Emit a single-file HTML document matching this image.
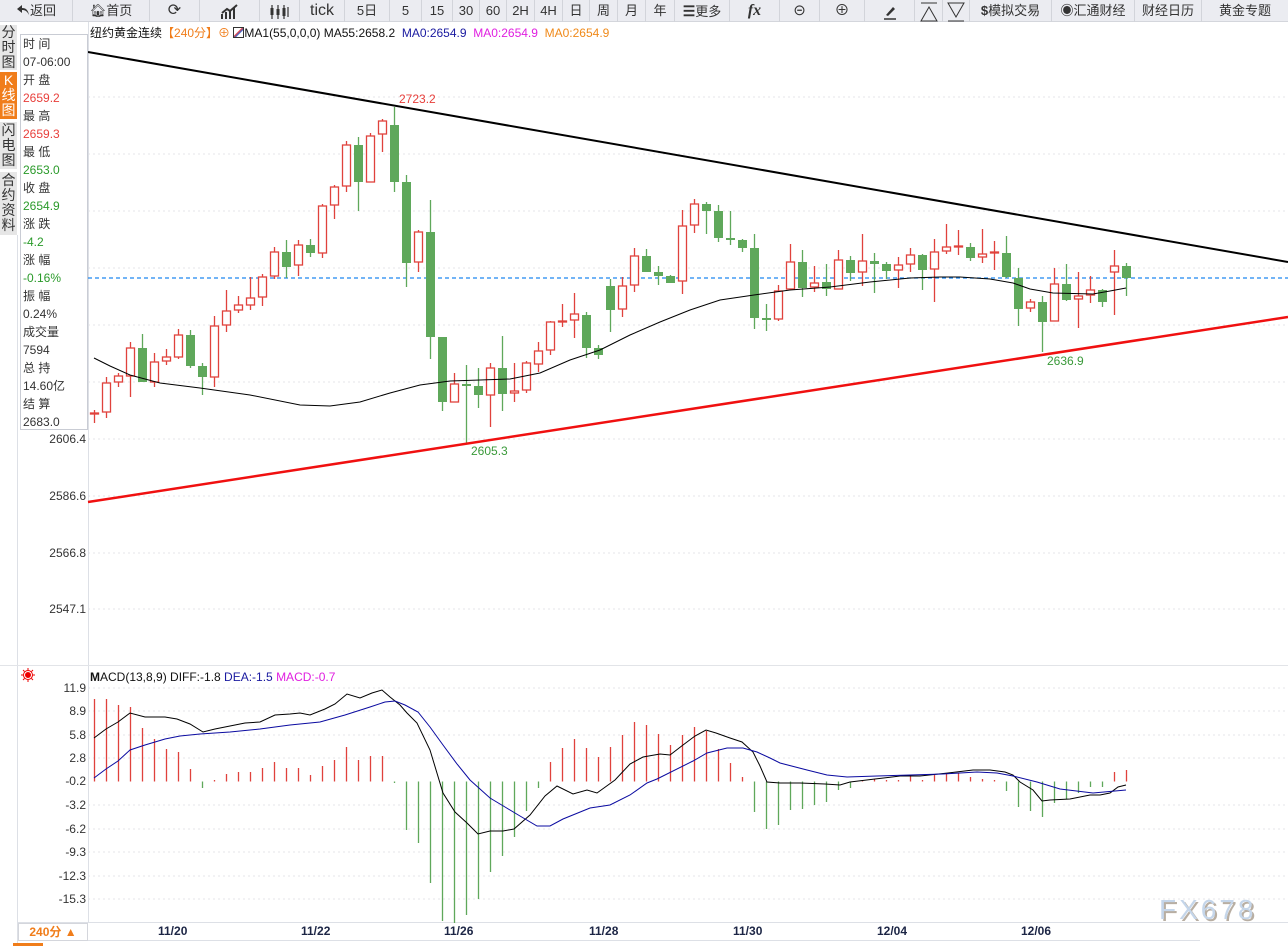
<!DOCTYPE html>
<html><head><meta charset="utf-8">
<style>
*{margin:0;padding:0;box-sizing:border-box}
body{width:1288px;height:946px;overflow:hidden;background:#fff;font-family:"Liberation Sans","Noto Sans CJK SC",sans-serif;position:relative}
#tb{position:absolute;left:0;top:0;width:1288px;height:22px;background:#ebecf1;border-bottom:1px solid #d4d6dc}
#tb div{position:absolute;top:0;height:22px;line-height:22px;font-size:13px;color:#333;text-align:center;border-right:1px solid #d2d4da}
#tabs div{position:absolute;left:0;width:17px;font-size:14px;line-height:15px;text-align:center;color:#333;background:#e6e6e6;padding-top:0}
#info{position:absolute;left:20px;top:34px;width:68px;height:396px;border:1px solid #c9ccd4;background:#fff}
#info div{position:absolute;left:2px;font-size:12px;line-height:14px;color:#333;white-space:nowrap}
.r{color:#e8403c!important}.g{color:#2a9a2a!important}
.xl{position:absolute;top:924px;font-size:12px;font-weight:bold;color:#1c2545}
</style></head><body>
<div id="tb">
<div style="left:0;width:73px"><svg width="14" height="12" viewBox="0 0 14 12" style="vertical-align:-1px"><path d="M6 1L1 5L6 9V6C9 6 11 7 13 11C12 6 10 4 6 4Z" fill="#333"/></svg>返回</div>
<div style="left:73px;width:77px">&#x1F3E0;&#xFE0E;首页</div>
<div style="left:150px;width:50px;font-size:16px">&#x27F3;</div>
<div style="left:200px;width:60px"><svg width="20" height="16" viewBox="0 0 20 16" style="vertical-align:middle"><path d="M2 15V10M6 15V8M10 15V6M14 15V4M2 9L7 5L10 7L17 1" stroke="#333" stroke-width="2" fill="none"/></svg></div>
<div style="left:260px;width:40px"><svg width="22" height="16" viewBox="0 0 22 16" style="vertical-align:middle"><path d="M3 1V15M9 1V15M15 1V15M19 3V13" stroke="#333" stroke-width="1.2"/><rect x="1.5" y="4" width="3" height="7" fill="#333"/><rect x="7.5" y="5" width="3" height="6" fill="#333"/><rect x="13.5" y="4" width="3" height="8" fill="#333"/></svg></div>
<div style="left:300px;width:45px;font-size:16px">tick</div>
<div style="left:345px;width:45px">5日</div>
<div style="left:390px;width:32px">5</div>
<div style="left:422px;width:31px">15</div>
<div style="left:453px;width:27px">30</div>
<div style="left:480px;width:27px">60</div>
<div style="left:507px;width:28px">2H</div>
<div style="left:535px;width:28px">4H</div>
<div style="left:563px;width:27px">日</div>
<div style="left:590px;width:28px">周</div>
<div style="left:618px;width:28px">月</div>
<div style="left:646px;width:29px">年</div>
<div style="left:675px;width:55px"><b style="font-size:14px">&#x2630;</b>更多</div>
<div style="left:730px;width:50px;font-family:'Liberation Serif',serif;font-style:italic;font-weight:bold;font-size:16px">fx</div>
<div style="left:780px;width:40px;font-size:15px">&#x229D;</div>
<div style="left:820px;width:45px;font-size:15px">&#x2295;</div>
<div style="left:865px;width:50px"><svg width="16" height="16" viewBox="0 0 16 16" style="vertical-align:middle"><path d="M4 11L11 3L13 5L6 12Z" fill="#333"/><path d="M2 15H14" stroke="#333" stroke-width="1.5"/></svg></div>
<div style="left:915px;width:28px"><svg width="20" height="20" viewBox="0 0 20 20" style="vertical-align:middle"><path d="M2 1H18M2 19L10 5L18 19Z" stroke="#333" fill="none"/></svg></div>
<div style="left:943px;width:27px"><svg width="20" height="20" viewBox="0 0 20 20" style="vertical-align:middle"><path d="M2 19H18M2 1L10 15L18 1Z" stroke="#333" fill="none"/></svg></div>
<div style="left:970px;width:82px"><b>$</b>模拟交易</div>
<div style="left:1052px;width:83px"><b>&#x25C9;</b>汇通财经</div>
<div style="left:1135px;width:67px">财经日历</div>
<div style="left:1202px;width:86px;border-right:none">黄金专题</div>
</div>

<div id="tabs">
<div style="top:25px;height:45px">分<br>时<br>图</div>
<div style="top:72px;height:47px;background:#f07d1a;color:#fff;padding-top:1px">K<br>线<br>图</div>
<div style="top:122px;height:47px;padding-top:1px">闪<br>电<br>图</div>
<div style="top:172px;height:63px;padding-top:1px">合<br>约<br>资<br>料</div>
</div>

<svg width="1288" height="946" style="position:absolute;left:0;top:0" id="ch">
<g stroke="#e4e6ea" stroke-dasharray="2,3" stroke-width="1">
<line x1="88" x2="1288" y1="97" y2="97"/><line x1="88" x2="1288" y1="154" y2="154"/><line x1="88" x2="1288" y1="211" y2="211"/><line x1="88" x2="1288" y1="268" y2="268"/><line x1="88" x2="1288" y1="325" y2="325"/><line x1="88" x2="1288" y1="382" y2="382"/><line x1="88" x2="1288" y1="439" y2="439"/><line x1="88" x2="1288" y1="496" y2="496"/><line x1="88" x2="1288" y1="553" y2="553"/><line x1="88" x2="1288" y1="609" y2="609"/>
<line x1="88" x2="1288" y1="688" y2="688"/><line x1="88" x2="1288" y1="711" y2="711"/><line x1="88" x2="1288" y1="735" y2="735"/><line x1="88" x2="1288" y1="758" y2="758"/><line x1="88" x2="1288" y1="805" y2="805"/><line x1="88" x2="1288" y1="829" y2="829"/><line x1="88" x2="1288" y1="852" y2="852"/><line x1="88" x2="1288" y1="876" y2="876"/><line x1="88" x2="1288" y1="899" y2="899"/>
</g>
<line x1="88.5" x2="88.5" y1="22" y2="922" stroke="#dde0e6"/>
<line x1="17.5" x2="17.5" y1="235" y2="946" stroke="#dde0e6"/>
<line x1="0" x2="1288" y1="665.5" y2="665.5" stroke="#e2e4e8"/>
<line x1="18" x2="1288" y1="922.5" y2="922.5" stroke="#dde0e6"/>
<line x1="78" x2="1200" y1="940.5" y2="940.5" stroke="#dde0e6"/>
<line x1="88" x2="1288" y1="278" y2="278" stroke="#1e88f0" stroke-dasharray="4,3" stroke-width="1.2"/>
<g id="cd"></g>
<polyline fill="none" stroke="#000" stroke-width="1" points="94,358 110,366 130,375 160,383 200,388 250,395 300,405 330,406 360,402 390,393 420,385 450,381 480,380 510,379 540,373 570,360 600,350 630,335 660,322 690,310 720,300 754,295 790,290 830,287 870,282 910,278 940,277 960,277 990,279 1013,283 1030,289 1053,293 1093,294 1110,291 1126,288"/>
<line x1="88" y1="52" x2="1288" y2="262" stroke="#000" stroke-width="2"/>
<line x1="88" y1="502" x2="1288" y2="317" stroke="#f01010" stroke-width="2.5"/>
<text x="399" y="103" font-size="12" fill="#e8403c">2723.2</text>
<text x="471" y="455" font-size="12" fill="#3a9a3a">2605.3</text>
<text x="1047" y="365" font-size="12" fill="#3a9a3a">2636.9</text>
<g id="mb"></g>
<polyline fill="none" stroke="#000" stroke-width="1" points="94,738 106,729 118,722 130,713 145,717 165,717 177,719 190,724 203,732 215,729 230,726 245,723 260,722 275,715 290,714 300,713 310,715 325,709 335,704 347,694 360,698 372,693 382,690 390,697 400,705 407,713 417,723 430,750 443,793 455,812 467,823 478,834 490,831 503,831 514,829 530,815 545,796 557,786 573,794 587,790 597,793 615,780 630,764 643,757 660,754 670,755 683,745 695,736 706,730 716,733 730,738 742,742 753,752 760,766 767,782 780,783 800,783 825,784 840,785 850,782 875,779 900,776 920,776 948,773 973,770 990,770 1005,772 1013,775 1020,782 1033,790 1042,801 1050,800 1070,799 1090,795 1100,795 1110,793 1118,787 1126,785"/>
<polyline fill="none" stroke="#0a0aa0" stroke-width="1" points="94,778 106,769 118,761 130,750 145,745 165,739 180,736 200,734 230,732 260,729 290,725 320,722 345,715 370,707 385,702 395,701 405,705 418,712 430,727 443,745 457,764 470,780 490,798 505,807 520,816 537,826 550,826 563,819 590,808 610,805 630,795 647,783 657,779 693,761 707,753 727,748 743,748 757,752 770,758 780,763 807,770 827,775 847,777 877,776 910,775 943,774 977,772 997,773 1013,776 1037,782 1060,789 1093,793 1126,790"/>
<g font-size="12" fill="#333" text-anchor="end">
<text x="86" y="443">2606.4</text><text x="86" y="500">2586.6</text><text x="86" y="557">2566.8</text><text x="86" y="613">2547.1</text>
<text x="86" y="692">11.9</text><text x="86" y="715">8.9</text><text x="86" y="739">5.8</text><text x="86" y="762">2.8</text><text x="86" y="785">-0.2</text><text x="86" y="809">-3.2</text><text x="86" y="833">-6.2</text><text x="86" y="856">-9.3</text><text x="86" y="880">-12.3</text><text x="86" y="903">-15.3</text>
</g>
<g stroke="#e00" fill="none"><circle cx="28" cy="675" r="2.5" fill="#e00"/><circle cx="28" cy="675" r="4.5"/><path d="M28 668v2M28 680v2M21 675h2M33 675h2M23 670l1.5 1.5M33 670l-1.5 1.5M23 680l1.5-1.5M33 680l-1.5-1.5"/></g>
<text x="90" y="681" font-size="12" fill="#111"><tspan font-weight="bold">M</tspan>ACD(13,8,9) DIFF:-1.8 <tspan fill="#1a1aa0">DEA:-1.5</tspan> <tspan fill="#e020e0">MACD:-0.7</tspan></text>
<text x="1161" y="921" font-size="28" fill="#8a7a66" opacity=".6" letter-spacing="3">FX678</text>
<text x="1159" y="919" font-size="28" fill="#c5d6ea" letter-spacing="3">FX678</text>
<rect x="13" y="943" width="30" height="3" fill="#f07d1a"/>
</svg>

<div style="position:absolute;left:90px;top:24px;font-size:12px;white-space:nowrap;color:#111">纽约黄金连续<span style="color:#f07d1a">【240分】⊕</span> <span style="display:inline-block;width:11px;height:11px;border:1px solid #333;vertical-align:-1px;background:linear-gradient(135deg,#fff 40%,#e44 45%,#36c 60%,#fff 65%)"></span>MA1(55,0,0,0) MA55:2658.2 &nbsp;<span style="color:#1a1aa0">MA0:2654.9</span> &nbsp;<span style="color:#e020e0">MA0:2654.9</span> &nbsp;<span style="color:#f08a1a">MA0:2654.9</span></div>

<div id="info">
<div style="top:2px">时 间</div><div style="top:20px">07-06:00</div>
<div style="top:38px">开 盘</div><div style="top:56px" class="r">2659.2</div>
<div style="top:74px">最 高</div><div style="top:92px" class="r">2659.3</div>
<div style="top:110px">最 低</div><div style="top:128px" class="g">2653.0</div>
<div style="top:146px">收 盘</div><div style="top:164px" class="g">2654.9</div>
<div style="top:182px">涨 跌</div><div style="top:200px" class="g">-4.2</div>
<div style="top:218px">涨 幅</div><div style="top:236px" class="g">-0.16%</div>
<div style="top:254px">振 幅</div><div style="top:272px">0.24%</div>
<div style="top:290px">成交量</div><div style="top:308px">7594</div>
<div style="top:326px">总 持</div><div style="top:344px">14.60亿</div>
<div style="top:362px">结 算</div><div style="top:380px">2683.0</div>
</div>

<div style="position:absolute;left:18px;top:923px;width:70px;height:18px;border:1px solid #d4d6dc;font-size:12px;line-height:16px;color:#f07d1a;font-weight:bold;text-align:center">240分 ▲</div>
<div class="xl" style="left:158px">11/20</div><div class="xl" style="left:301px">11/22</div><div class="xl" style="left:444px">11/26</div><div class="xl" style="left:589px">11/28</div><div class="xl" style="left:733px">11/30</div><div class="xl" style="left:877px">12/04</div><div class="xl" style="left:1021px">12/06</div>

<script>
var C=[[413,414,410,423,'r'],[383,412,377,418,'r'],[376,382,373,387,'r'],[348,376,342,397,'r'],[348,382,334,382,'g'],[362,382,353,387,'r'],[357,361,349,365,'r'],[335,357,329,359,'r'],[335,366,330,368,'g'],[366,377,363,395,'g'],[326,377,316,387,'r'],[311,325,290,332,'r'],[305,310,296,313,'r'],[298,305,277,310,'r'],[277,297,274,306,'r'],[252,276,247,279,'r'],[252,267,240,278,'g'],[245,265,240,276,'r'],[245,253,239,257,'g'],[206,253,204,258,'r'],[187,205,185,219,'r'],[145,186,141,192,'r'],[145,182,137,211,'g'],[136,182,133,182,'r'],[121,134,119,152,'r'],[125,182,107,192,'g'],[182,263,175,287,'g'],[232,262,230,272,'r'],[232,337,200,359,'g'],[337,402,337,411,'g'],[384,402,373,402,'r'],[384,386,365,443,'g'],[386,395,368,408,'g'],[368,395,363,427,'r'],[368,394,336,411,'g'],[391,393,363,402,'r'],[363,390,361,393,'r'],[351,364,342,372,'r'],[322,350,321,355,'r'],[321,322,304,327,'r'],[314,320,293,338,'r'],[315,348,312,358,'g'],[348,355,345,359,'g'],[286,310,279,332,'g'],[286,309,277,317,'r'],[256,285,248,292,'r'],[256,272,249,272,'g'],[272,276,266,285,'g'],[276,283,275,283,'g'],[226,281,210,294,'r'],[204,225,199,233,'r'],[204,211,202,234,'g'],[211,238,205,242,'g'],[238,240,211,245,'g'],[240,248,239,252,'g'],[248,318,234,329,'g'],[318,320,304,331,'g'],[291,319,285,321,'r'],[262,289,244,290,'r'],[262,288,250,297,'g'],[283,287,266,292,'r'],[282,289,264,296,'g'],[260,289,250,289,'r'],[260,273,256,281,'g'],[261,272,234,286,'r'],[261,264,253,293,'g'],[264,271,262,279,'g'],[265,270,257,288,'r'],[255,264,248,272,'r'],[255,270,254,290,'g'],[252,269,239,302,'r'],[247,251,224,254,'r'],[246,247,230,255,'r'],[247,258,243,261,'g'],[254,257,229,263,'r'],[252,253,241,270,'r'],[253,277,236,278,'g'],[278,309,268,326,'g'],[302,308,299,312,'r'],[302,322,296,352,'g'],[284,321,268,321,'r'],[284,300,264,301,'g'],[296,299,272,328,'r'],[290,295,276,303,'r'],[290,302,289,307,'g'],[266,272,250,315,'r'],[266,278,263,296,'g']];
var M=[699,699,705,707,728,739,749,752,769,788,780,774,772,772,768,762,768,768,775,766,760,747,760,756,756,783,830,843,883,921,923,915,899,872,856,837,811,788,762,748,739,748,757,747,735,722,725,734,745,735,727,731,749,763,777,812,829,825,810,809,805,802,790,788,781,779,780,780,776,780,775,774,773,777,779,780,791,807,811,817,803,799,793,787,787,772,770];
var s='',m='',Z=781.5;
for(var i=0;i<C.length;i++){var c=C[i],x=94.5+12*i,col=c[4]=='r'?'#e0423c':'#5fa85b';
if(c[4]=='r'){s+='<line x1="'+x+'" x2="'+x+'" y1="'+c[2]+'" y2="'+c[0]+'" stroke="'+col+'" stroke-width="1.3"/><line x1="'+x+'" x2="'+x+'" y1="'+c[1]+'" y2="'+c[3]+'" stroke="'+col+'" stroke-width="1.3"/>';
var h=Math.max(c[1]-c[0],1);s+='<rect x="'+(x-4)+'" y="'+c[0]+'" width="8" height="'+h+'" fill="#fff" stroke="'+col+'" stroke-width="1.3"/>';}
else{s+='<line x1="'+x+'" x2="'+x+'" y1="'+c[2]+'" y2="'+c[3]+'" stroke="'+col+'" stroke-width="1.3"/><rect x="'+(x-4.5)+'" y="'+c[0]+'" width="9" height="'+Math.max(c[1]-c[0],2)+'" fill="'+col+'"/>';}
var v=M[i];m+='<line x1="'+x+'" x2="'+x+'" y1="'+Z+'" y2="'+v+'" stroke="'+(v<Z?'#e0423c':'#5fa85b')+'" stroke-width="1.3"/>';}
document.getElementById('cd').innerHTML=s;document.getElementById('mb').innerHTML=m;
</script>
</body></html>
